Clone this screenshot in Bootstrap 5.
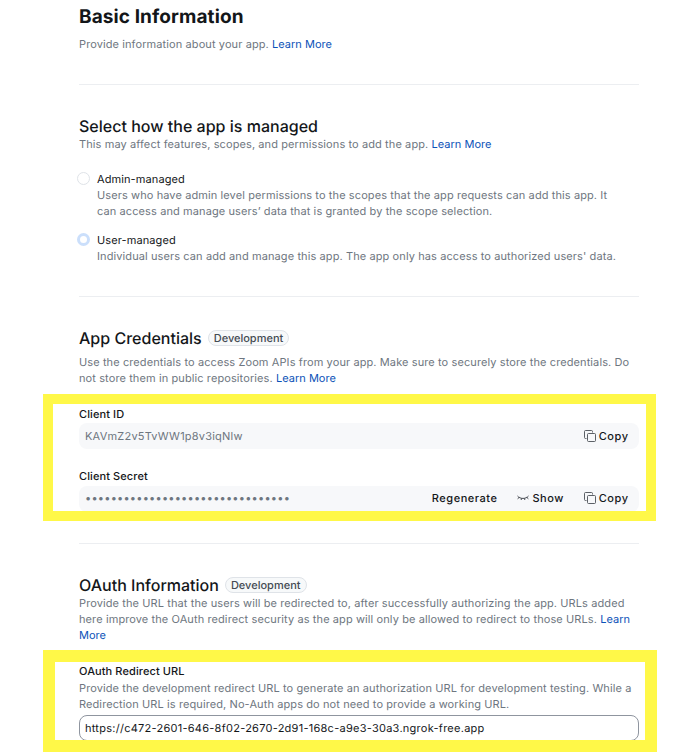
<!DOCTYPE html>
<html lang="en">
<head>
<meta charset="utf-8">
<meta name="viewport" content="width=device-width, initial-scale=1">
<title>Basic Information</title>
<link href="https://cdn.jsdelivr.net/npm/bootstrap@5.3.0/dist/css/bootstrap.min.css" rel="stylesheet">
<style>
  body { font-family: Inter, "Liberation Sans", sans-serif; font-size: 11px; line-height: 16px; letter-spacing: .1px; color: #131619; height: 753px; overflow: hidden; text-rendering: geometricPrecision; }
  .page { margin-left: 79px; width: 560px; height: 753px; }
  .page p { color: #6e7680; margin: 0; white-space: nowrap; }
  .page a { color: #0b52b8; text-decoration: none; letter-spacing: .02px; }
  h1 { font-size: 19px; line-height: 24px; font-weight: 700; letter-spacing: .1px; margin: 0; padding-top: 5px; }
  h2 { font-size: 16px; line-height: 20px; font-weight: 500; letter-spacing: .01px; margin: 0; }
  .intro-text { padding-top: 7px; }
  .part { border-bottom: 1px solid #eceef1; }
  .part-intro { height: 85px; }
  .part-managed { height: 212px; padding-top: 31px; }
  .part-keys { height: 247px; padding-top: 31px; }
  .part-oauth { padding-top: 31px; }
  .env { font-size: 11px; line-height: 14px; font-weight: 500; letter-spacing: 0; color: #444b53; background: #f7f9fa; border: 1px solid #dfe3e8; padding: 0 5px; margin-left: 6px; }
  .choice { padding-left: 18px; position: relative; margin-top: 19px; }
  .choice + .choice { margin-top: 13px; }
  .choice input { position: absolute; left: -2px; top: 1px; width: 13px; height: 13px; margin: 0; border: 1px solid #dfe3e8; }
  .choice input:checked { background: #fff; border: 3px solid #cbdffb; }
  .marked { border: 10px solid #fff848; margin: 8px 0 0 -36px; width: 613px; height: 127px; padding: 2px 7px 0 26px; overflow: hidden; }
  .marked-url { border-width: 12px; margin-top: 7px; width: 614px; height: 102px; padding: 1px 6px 0 24px; }
  .name { font-weight: 500; letter-spacing: .1px; }
  .field { height: 26px; border-radius: 8px; background: #f7f8fa; padding: 0 10.5px 0 6px; margin-top: 1px; }
  .field .value { color: #6e7680; letter-spacing: .22px; }
  .act { font-weight: 500; letter-spacing: .52px; margin-left: 3px; }
  .act + svg { margin-left: 20px; }
  .second { margin-top: 19px; }
  .second + .field { margin-top: 2px; padding-bottom: 2px; }
  .url { height: 26px; border: 1px solid #8f959f; border-radius: 8px; padding: 4px 5px; margin-top: 3px; letter-spacing: .26px; }
</style>
</head>
<body class="bg-white">
<main class="page">
  <section class="part part-intro">
    <h1>Basic Information</h1>
    <p class="intro-text">Provide information about your app. <a href="#">Learn More</a></p>
  </section>

  <section class="part part-managed">
    <h2>Select how the app is managed</h2>
    <p>This may affect features, scopes, and permissions to add the app. <a href="#">Learn More</a></p>
    <div class="choice">
      <input class="form-check-input" type="radio" name="manage" id="admin">
      <label class="d-block" for="admin">Admin-managed</label>
      <p>Users who have admin level permissions to the scopes that the app requests can add this app. It<br>can access and manage users’ data that is granted by the scope selection.</p>
    </div>
    <div class="choice">
      <input class="form-check-input" type="radio" name="manage" id="user" checked>
      <label class="d-block" for="user">User-managed</label>
      <p>Individual users can add and manage this app. The app only has access to authorized users' data.</p>
    </div>
  </section>

  <section class="part part-keys">
    <div class="d-flex align-items-center"><h2>App Credentials</h2><span class="env rounded-pill">Development</span></div>
    <p style="margin-top:6px">Use the credentials to access Zoom APIs from your app. Make sure to securely store the credentials. Do<br>not store them in public repositories. <a href="#">Learn More</a></p>
    <div class="marked">
      <div class="name">Client ID</div>
      <div class="field d-flex align-items-center">
        <span class="value me-auto">KAVmZ2v5TvWW1p8v3iqNlw</span>
        <svg width="12" height="12" viewBox="0 0 12 12" fill="none" stroke="#4a4f56" stroke-width=".9"><path d="M2.5 8.5h-1a1 1 0 0 1-1-1v-6a1 1 0 0 1 1-1h6a1 1 0 0 1 1 1v1"/><rect x="3.5" y="3.5" width="8" height="8" rx="1"/></svg>
        <span class="act">Copy</span>
      </div>
      <div class="name second">Client Secret</div>
      <div class="field d-flex align-items-center">
        <span class="value me-auto">••••••••••••••••••••••••••••••••</span>
        <span class="act">Regenerate</span>
        <svg width="12" height="8" viewBox="0 0 12 8" fill="none" stroke="#33383f" stroke-width=".9"><path d="M.5 2C3 5.2 9 5.2 11.5 2M2.2 3.4.6 4.8M4.6 4.4 4.1 6M7.4 4.4 7.9 6M9.8 3.4l1.6 1.4"/></svg>
        <span class="act">Show</span>
        <svg width="12" height="12" viewBox="0 0 12 12" fill="none" stroke="#4a4f56" stroke-width=".9"><path d="M2.5 8.5h-1a1 1 0 0 1-1-1v-6a1 1 0 0 1 1-1h6a1 1 0 0 1 1 1v1"/><rect x="3.5" y="3.5" width="8" height="8" rx="1"/></svg>
        <span class="act">Copy</span>
      </div>
    </div>
  </section>

  <section class="part-oauth">
    <div class="d-flex align-items-center"><h2>OAuth Information</h2><span class="env rounded-pill">Development</span></div>
    <p>Provide the URL that the users will be redirected to, after successfully authorizing the app. URLs added<br>here improve the OAuth redirect security as the app will only be allowed to redirect to those URLs. <a href="#">Learn<br>More</a></p>
    <div class="marked marked-url">
      <div class="name">OAuth Redirect URL</div>
      <p style="margin-top:1px">Provide the development redirect URL to generate an authorization URL for development testing. While a<br>Redirection URL is required, No-Auth apps do not need to provide a working URL.</p>
      <div class="url">https://c472-2601-646-8f02-2670-2d91-168c-a9e3-30a3.ngrok-free.app</div>
    </div>
  </section>
</main>
<script src="https://cdn.jsdelivr.net/npm/bootstrap@5.3.0/dist/js/bootstrap.bundle.min.js"></script>
</body>
</html>
